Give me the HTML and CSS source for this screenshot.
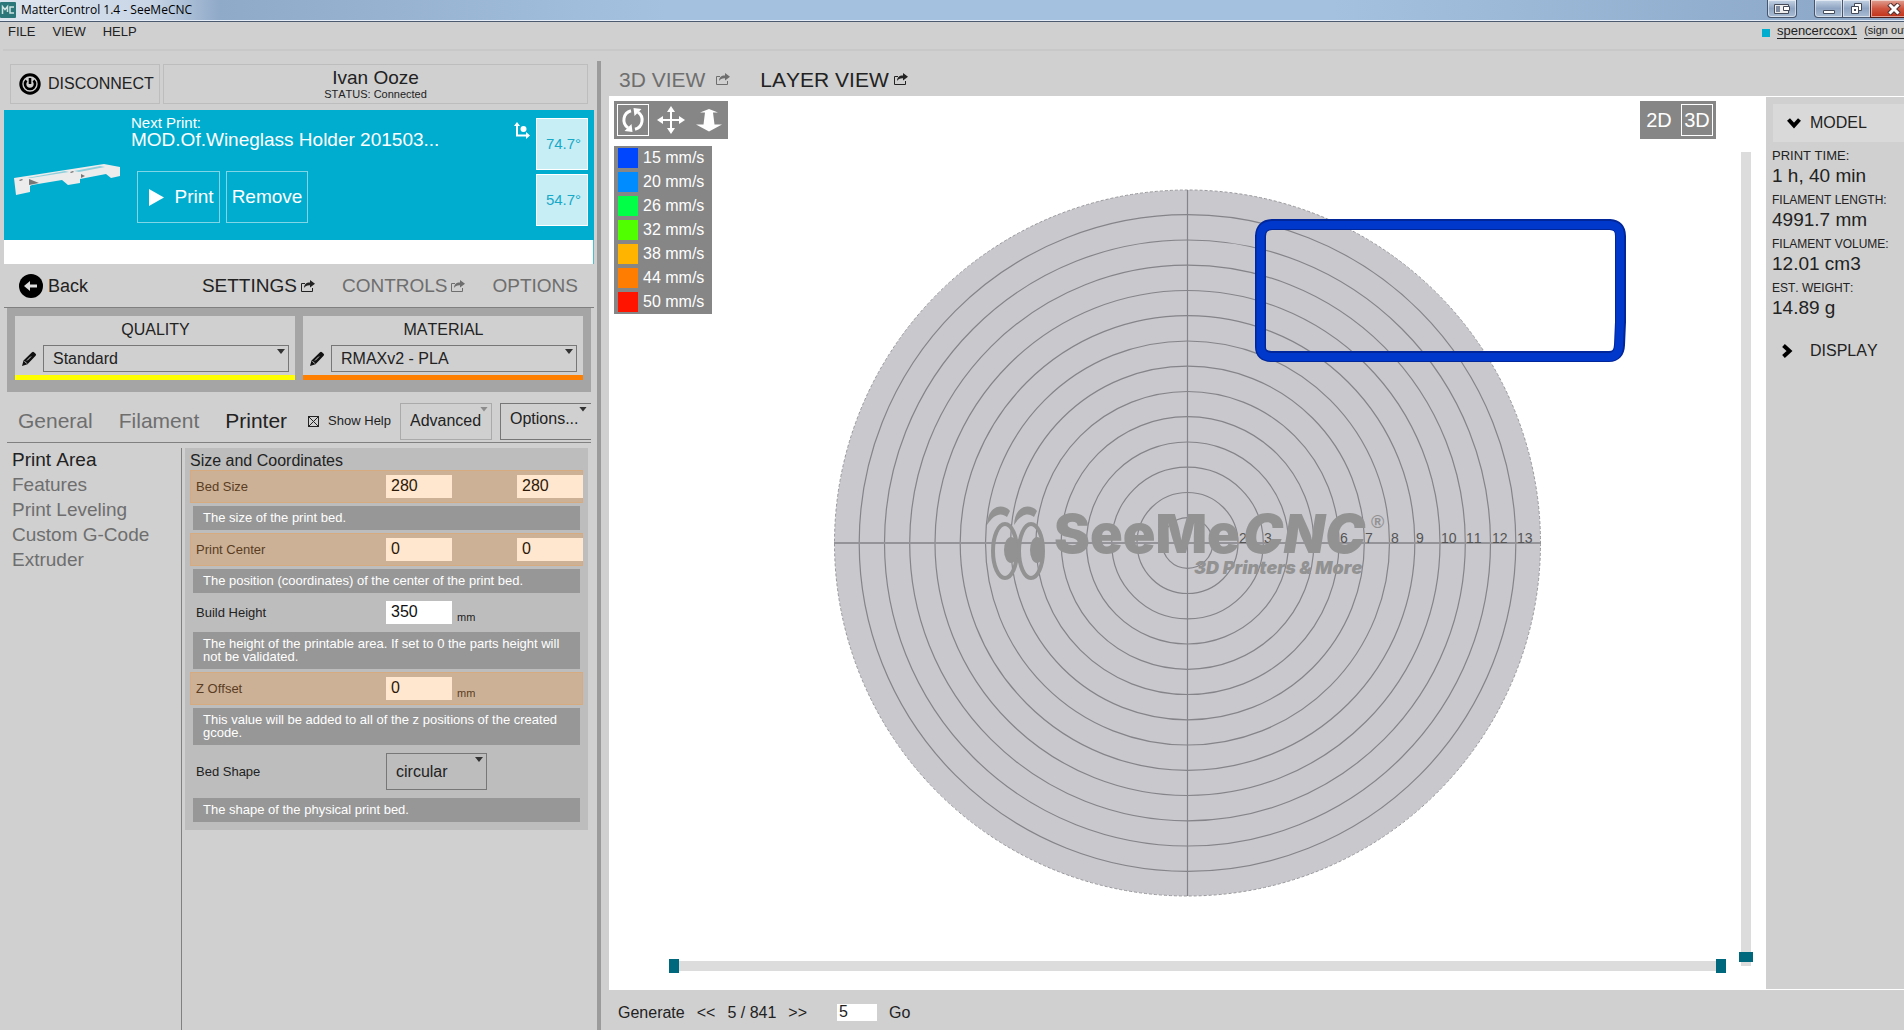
FILE: index.html
```
<!DOCTYPE html>
<html lang="en">
<head>
<meta charset="utf-8">
<title>MatterControl 1.4 - SeeMeCNC</title>
<link rel="stylesheet" href="styles.css">
</head>
<body>
<svg class="defs" aria-hidden="true">
  <symbol id="popout" viewBox="0 0 14 12">
    <path d="M4 3.5H.5v8h11V8" fill="none" stroke="currentColor" stroke-width="1"/>
    <path d="M3 8c0-3.500 2-5.500 6-5.500V0l5 3.800-5 3.700V5.200C6 5 4.500 6 3 8z" fill="currentColor"/>
  </symbol>
  <symbol id="pencil" viewBox="0 0 15 15">
    <path d="M0 15l1.500-5.500L10 1.200Q11 .2 12 1.200l1.600 1.600q1 1 0 2L5.500 13.300z" fill="#111"/>
    <path d="M2.500 10.200l2.400 2.400M5 9.500l4-4" stroke="#ccc" stroke-width="1" fill="none"/>
  </symbol>
</svg>

<header class="titlebar">
  <svg class="app-icon" viewBox="0 0 16 16" aria-hidden="true"><rect width="16" height="16" rx="1" fill="#2c7779"/><path d="M2.500 12V4.500l2.500 3 2.500-3V10M14 5h-4v6h4" fill="none" stroke="#cfe3e3" stroke-width="1.500"/></svg>
  <h1 class="app-title">MatterControl 1.4 - SeeMeCNC</h1>
  <div class="window-buttons">
    <button class="win-btn win-extra" aria-label="Displays"><svg width="16" height="12" viewBox="0 0 16 12"><path d="M.5 1.500h14v9H.5z" fill="#eee" stroke="#444a58"/><path d="M2 3h4v6H2z" fill="#7f8ba0"/><path d="M9.500 3.500h6v4h-6z" fill="#fff" stroke="#444a58"/></svg></button>
    <button class="win-btn" aria-label="Minimize"><svg width="14" height="12" viewBox="0 0 14 12"><path d="M1.500 7.500h11v3h-11z" fill="#fff" stroke="#444a58"/></svg></button>
    <button class="win-btn win-restore" aria-label="Restore"><svg width="14" height="12" viewBox="0 0 14 12"><path d="M4.500.5h7v7h-7z" fill="#fff" stroke="#444a58"/><path d="M1.500 3.500h7v7h-7z" fill="#fff" stroke="#444a58"/><path d="M4 6h2v2H4z" fill="#444a58"/></svg></button>
    <button class="win-btn win-close" aria-label="Close"><svg width="14" height="12" viewBox="0 0 14 12"><path d="M2 1l10 10M12 1L2 11" stroke="#503030" stroke-width="5"/><path d="M2.500 1.500l9 9M11.500 1.500l-9 9" stroke="#fff" stroke-width="3"/></svg></button>
  </div>
</header>

<div class="menubar">
  <nav class="menus">
    <button class="menu">FILE</button>
    <button class="menu">VIEW</button>
    <button class="menu">HELP</button>
  </nav>
  <div class="account">
    <span class="online"></span>
    <a class="user" href="#">spencerccox1</a>
    <a class="signout" href="#">(sign out)</a>
  </div>
</div>

<main class="workspace">
  <section class="left-pane">
    <div class="connection">
      <button class="disconnect">
        <svg width="22" height="22" viewBox="0 0 22 22" aria-hidden="true"><circle cx="11" cy="11" r="9.200" fill="none" stroke="#000" stroke-width="3"/><path d="M7.500 7.500a5 5 0 1 0 7 0" fill="none" stroke="#000" stroke-width="2.600"/><path d="M11 5v6" stroke="#000" stroke-width="2.600"/></svg>
        DISCONNECT
      </button>
      <button class="printer-status"><span class="printer-name">Ivan Ooze</span><span class="printer-state">STATUS: Connected</span></button>
    </div>

    <section class="next-print">
      <svg class="thumb" viewBox="0 0 106 32" aria-hidden="true">
        <path d="M0 14L90 0l16 3v9l-9 2-5-4-26 5v4l-12 2-6-5-30 5-2 1v6L2 31z" fill="#ececec"/>
        <path d="M13 14l38-7 4 1-38 6zM60 7l26-5 5 1-26 5z" fill="#8fcfdc"/>
        <path d="M15 15l10 4-10 2zM67 10l4 2-4 2zM5 16l3-1 1 1-3 1zM56 8l3-1 1 1-3 1z" fill="#777"/>
      </svg>
      <div class="job">
        <p class="job-caption">Next Print:</p>
        <p class="job-name">MOD.Of.Wineglass Holder 201503...</p>
        <div class="job-actions">
          <button class="job-btn print"><svg width="15" height="17" viewBox="0 0 15 17" aria-hidden="true"><path d="M0 0l15 8.500L0 17z" fill="#fff"/></svg>Print</button>
          <button class="job-btn">Remove</button>
        </div>
      </div>
      <svg class="axis" width="16" height="17" viewBox="0 0 16 17" aria-hidden="true"><path d="M3 3v10.500h10" fill="none" stroke="#fff" stroke-width="2"/><path d="M0 4l3-4 3 4zM12 10l4 3.500-4 3.500zM6.500 7a3 3 0 1 1 6 0 3 3 0 1 1-6 0z" fill="#fff"/></svg>
      <div class="temps">
        <button class="temp">74.7°</button>
        <button class="temp">54.7°</button>
      </div>
    </section>
    <div class="queue-strip"></div>

    <nav class="pane-tabs">
      <button class="back"><svg width="24" height="24" viewBox="0 0 24 24" aria-hidden="true"><circle cx="12" cy="12" r="12" fill="#000"/><path d="M18 12H9" stroke="#ddd" stroke-width="3"/><path d="M5 12l6-5v10z" fill="#ddd"/></svg>Back</button>
      <button class="pane-tab active">SETTINGS<svg width="14" height="12" aria-hidden="true"><use href="#popout"/></svg></button>
      <button class="pane-tab">CONTROLS<svg width="14" height="12" aria-hidden="true"><use href="#popout"/></svg></button>
      <button class="pane-tab">OPTIONS</button>
    </nav>

    <section class="presets">
      <div class="preset quality">
        <label class="preset-title" for="quality">QUALITY</label>
        <div class="preset-row">
          <svg width="15" height="15" aria-hidden="true"><use href="#pencil"/></svg>
          <span class="drop"><select id="quality"><option>Standard</option></select></span>
        </div>
      </div>
      <div class="preset material">
        <label class="preset-title" for="material">MATERIAL</label>
        <div class="preset-row">
          <svg width="15" height="15" aria-hidden="true"><use href="#pencil"/></svg>
          <span class="drop"><select id="material"><option>RMAXv2 - PLA</option></select></span>
        </div>
      </div>
    </section>

    <div class="setting-tabs">
      <button class="setting-tab">General</button>
      <button class="setting-tab">Filament</button>
      <button class="setting-tab active">Printer</button>
      <label class="show-help"><input type="checkbox" checked>Show Help</label>
      <span class="drop level"><select aria-label="Settings level"><option>Advanced</option></select></span>
      <span class="drop more"><select aria-label="Options"><option>Options...</option></select></span>
    </div>

    <div class="settings-body">
      <nav class="categories">
        <button class="category active">Print Area</button>
        <button class="category">Features</button>
        <button class="category">Print Leveling</button>
        <button class="category">Custom G-Code</button>
        <button class="category">Extruder</button>
      </nav>
      <div class="fields-wrap">
        <section class="fields">
          <h2 class="fields-title">Size and Coordinates</h2>
          <div class="field changed">
            <label for="bed-x">Bed Size</label>
            <input id="bed-x" type="text" value="280"><span class="unit"></span>
            <input type="text" value="280" aria-label="Bed size Y">
          </div>
          <p class="help">The size of the print bed.</p>
          <div class="field changed">
            <label for="center-x">Print Center</label>
            <input id="center-x" type="text" value="0"><span class="unit"></span>
            <input type="text" value="0" aria-label="Print center Y">
          </div>
          <p class="help">The position (coordinates) of the center of the print bed.</p>
          <div class="field">
            <label for="height">Build Height</label>
            <input id="height" type="text" value="350"><span class="unit">mm</span>
          </div>
          <p class="help">The height of the printable area. If set to 0 the parts height will not be validated.</p>
          <div class="field changed">
            <label for="z-offset">Z Offset</label>
            <input id="z-offset" type="text" value="0"><span class="unit">mm</span>
          </div>
          <p class="help">This value will be added to all of the z positions of the created gcode.</p>
          <div class="field shape">
            <label for="shape">Bed Shape</label>
            <span class="drop"><select id="shape"><option>circular</option></select></span>
          </div>
          <p class="help">The shape of the physical print bed.</p>
        </section>
      </div>
    </div>
  </section>

  <div class="splitter"></div>

  <section class="right-pane">
    <nav class="view-tabs">
      <button class="view-tab">3D VIEW<svg width="14" height="12" aria-hidden="true"><use href="#popout"/></svg></button>
      <button class="view-tab active">LAYER VIEW<svg width="14" height="12" aria-hidden="true"><use href="#popout"/></svg></button>
    </nav>

    <div class="view-area">
      <div class="viewport">
        <svg class="scene" viewBox="609 96 1157 894" role="img" aria-label="Print bed, layer 5">
          <circle cx="1187.500" cy="543" r="353" fill="#c9c8cd" stroke="#98989c" stroke-dasharray="3 2"/>
          <g fill="none" stroke="#848489" stroke-width="1.200">
            <circle cx="1187.500" cy="543" r="25.300"/><circle cx="1187.500" cy="543" r="50.500"/>
            <circle cx="1187.500" cy="543" r="75.800"/><circle cx="1187.500" cy="543" r="101"/>
            <circle cx="1187.500" cy="543" r="126.300"/><circle cx="1187.500" cy="543" r="151.500"/>
            <circle cx="1187.500" cy="543" r="176.800"/><circle cx="1187.500" cy="543" r="202"/>
            <circle cx="1187.500" cy="543" r="227.300"/><circle cx="1187.500" cy="543" r="252.500"/>
            <circle cx="1187.500" cy="543" r="277.800"/><circle cx="1187.500" cy="543" r="303"/>
            <circle cx="1187.500" cy="543" r="328.300"/>
            <path d="M1187.500 190v706"/>
          </g>
          <path d="M834 543h707" stroke="#949498" stroke-width="2"/>
          <g class="ring-no">
            <text x="1239" y="543">2</text><text x="1264" y="543">3</text><text x="1340" y="543">6</text>
            <text x="1365" y="543">7</text><text x="1391" y="543">8</text><text x="1416" y="543">9</text>
            <text x="1441" y="543">10</text><text x="1466" y="543">11</text><text x="1492" y="543">12</text>
            <text x="1517" y="543">13</text>
          </g>
          <g fill="none" stroke="#929292" stroke-width="4">
            <ellipse cx="1005" cy="551" rx="12" ry="27"/><ellipse cx="1031" cy="551" rx="12" ry="27"/>
          </g>
          <g fill="#929292">
            <ellipse cx="1011" cy="550" rx="7" ry="13"/><ellipse cx="1037" cy="550" rx="7" ry="13"/>
            <path d="M987 525c1-22 18-21 23-14l-3 6c-6-5-13-3-20 8zM1014 525c1-22 18-21 23-14l-3 6c-6-5-13-3-20 8z"/>
            <text class="logo" x="1054" y="553">SeeMe</text>
            <text class="logo slant" x="1243" y="553">CNC</text>
            <text class="reg" x="1371" y="528">®</text>
            <text class="tagline" x="1194" y="574">3D Printers &amp; More</text>
          </g>
          <g fill="none" stroke-linejoin="round">
            <path d="M1272 224.500H1610Q1620.500 225 1620.500 236V322L1619.500 345Q1619 356.500 1609 356.500H1271Q1260.500 356 1260.500 347V236Q1261 225 1272 224.500z" stroke="#00269a" stroke-width="11"/>
            <path d="M1272 225H1610Q1620 225.500 1620 236V322L1619 345Q1618.500 357 1609 357H1271Q1260.500 356 1260.500 347V236Q1261 225.500 1272 225z" stroke="#0038cc" stroke-width="8"/>
          </g>
        </svg>
        <div class="view-tools">
          <div class="tool-group">
            <button class="tool selected" aria-label="Rotate"><svg width="24" height="24" viewBox="0 0 24 24"><path d="M10 2.800a9.500 9.500 0 0 0-3 17M14 21.200a9.500 9.500 0 0 0 3-17" fill="none" stroke="#fff" stroke-width="3"/><path d="M3.500 23l8 1-1-8zM20.500 1l-8-1 1 8z" fill="#fff"/></svg></button>
            <button class="tool" aria-label="Pan"><svg width="28" height="28" viewBox="0 0 28 28"><path d="M14 4v20M4 14h20" stroke="#fff" stroke-width="2"/><path d="M14 0l4 6h-8zM14 28l4-6h-8zM0 14l6-4v8zM28 14l-6-4v8z" fill="#fff"/></svg></button>
            <button class="tool" aria-label="Zoom"><svg width="26" height="24" viewBox="0 0 26 24"><path d="M13 1l9 3.500h-5l1.500 12H26L13 23.500 0 16.500h7.500L9 4.500H4z" fill="#fff"/></svg></button>
          </div>
          <ul class="legend">
            <li><i class="swatch s15"></i>15 mm/s</li>
            <li><i class="swatch s20"></i>20 mm/s</li>
            <li><i class="swatch s26"></i>26 mm/s</li>
            <li><i class="swatch s32"></i>32 mm/s</li>
            <li><i class="swatch s38"></i>38 mm/s</li>
            <li><i class="swatch s44"></i>44 mm/s</li>
            <li><i class="swatch s50"></i>50 mm/s</li>
          </ul>
          <div class="path-range">
            <input type="range" min="0" max="100" value="0" aria-label="Path start">
            <input type="range" min="0" max="100" value="100" aria-label="Path end">
          </div>
        </div>
        <div class="view-side">
          <div class="tool-group dims">
            <button class="tool">2D</button>
            <button class="tool selected">3D</button>
          </div>
          <input class="layer-range" type="range" min="1" max="841" value="5" aria-label="Layer">
        </div>
      </div>

      <aside class="details">
        <button class="section-head open"><svg width="14" height="12" viewBox="0 0 14 12" aria-hidden="true"><path d="M1.500 2.500L7 8.500l5.500-6" fill="none" stroke="#000" stroke-width="4"/></svg>MODEL</button>
        <dl class="stats">
          <dt class="first">PRINT TIME:</dt><dd>1 h, 40 min</dd>
          <dt>FILAMENT LENGTH:</dt><dd>4991.7 mm</dd>
          <dt>FILAMENT VOLUME:</dt><dd>12.01 cm3</dd>
          <dt>EST. WEIGHT:</dt><dd>14.89 g</dd>
        </dl>
        <button class="section-head"><svg width="14" height="14" viewBox="0 0 14 14" aria-hidden="true"><path d="M1.500 1.500L7.500 7l-6 5.500" fill="none" stroke="#000" stroke-width="4"/></svg>DISPLAY</button>
      </aside>
    </div>

    <footer class="layer-bar">
      <button class="bar-btn">Generate</button>
      <button class="bar-btn">&lt;&lt;</button>
      <span>5 / 841</span>
      <button class="bar-btn">&gt;&gt;</button>
      <input class="layer-input" type="text" value="5" aria-label="Layer number">
      <button class="bar-btn">Go</button>
    </footer>
  </section>
</main>
</body>
</html>
```
FILE: styles.css
```
* { box-sizing: border-box; }

body {
  margin: 0;
  height: 100vh;
  display: flex;
  flex-direction: column;
  overflow: hidden;
  background: #d0d0d0;
  color: #222;
  font: 16px/18px "Liberation Sans", Arial, sans-serif;
  font-kerning: none;
}

button, input, select { font: inherit; font-kerning: none; color: inherit; margin: 0; }
button { background: none; border: 0; padding: 0; text-align: left; white-space: nowrap; }
h1, h2, p, ul, dl, dd { margin: 0; padding: 0; font-weight: normal; }
svg { display: block; flex: none; }
.defs { position: absolute; width: 0; height: 0; }

/* Window title bar */
.titlebar {
  flex: none;
  display: flex;
  align-items: center;
  gap: 5px;
  height: 22px;
  padding-bottom: 2px;
  border-bottom: 1px solid #4c5a70;
  background: linear-gradient(90deg, #dde5ee 0, #c9d6e6 150px, #8fa9c8 220px, #98b3d2 400px, #a4c2e0 35%, #a4c2e0 70%, #8aa5c6 100%);
  box-shadow: inset 0 -1px #e4edf7;
}
.app-icon { width: 16px; height: 16px; }
.app-title { flex: 1; font: 12px/18px "Open Sans", "Noto Sans", sans-serif; color: #000; }
.window-buttons { display: flex; align-self: flex-start; height: 18px; }
.win-btn {
  display: flex;
  align-items: center;
  justify-content: center;
  width: 28px;
  border: 1px solid #46546c;
  border-top: 0;
  background: linear-gradient(#c5d3e5, #8ea4c2 50%, #a9bcd4);
  box-shadow: inset 0 0 0 1px #ffffff88;
}
.win-extra { width: 30px; margin-right: 17px; border-radius: 0 0 4px 4px; }
.win-extra + .win-btn { width: 29px; border-radius: 0 0 0 4px; }
.win-restore { width: 27px; border-width: 0 0 1px; }
.win-close { width: 48px; margin-right: -14px; background: linear-gradient(#e0a193, #cf5640 50%, #c23018); border-color: #4b1c18; }

/* Menu bar */
.menubar {
  flex: none;
  display: flex;
  justify-content: space-between;
  height: 29px;
  margin-left: 3px;
  border-bottom: 2px solid #c8c8c8;
}
.menus { display: flex; gap: 17px; padding-left: 5px; font-size: 13px; height: 20px; }
.account { display: flex; align-items: flex-start; gap: 7px; padding-top: 1px; margin-right: -6px; }
.online { width: 8px; height: 8px; margin-top: 6px; background: #00adcf; }
.account a { color: #222; text-decoration: none; border-bottom: 1px solid #222; line-height: 15px; }
.user { font-size: 13px; }
.signout { font-size: 11px; }

.workspace { flex: 1; display: flex; min-height: 0; }

/* Left pane */
.left-pane { flex: none; width: 597px; display: flex; flex-direction: column; padding-top: 13px; overflow: hidden; }
.splitter { flex: none; width: 4px; margin-top: 10px; background: #9b9b9b; }

.connection { display: flex; gap: 3px; height: 40px; margin: 0 9px 6px 10px; }
.connection button { border: 1px solid #bdbdbd; }
.disconnect { display: flex; align-items: center; gap: 7px; width: 150px; padding-left: 8px; }
.printer-status { flex: 1; display: flex; flex-direction: column; align-items: center; padding-top: 3px; }
.printer-name { font-size: 19px; line-height: 20px; }
.printer-state { font-size: 11px; line-height: 12px; }

.next-print { flex: none; display: flex; height: 130px; margin: 0 3px 0 4px; padding: 8px 6px 0 10px; background: #00adcf; color: #fff; }
.thumb { width: 106px; height: 32px; margin: 46px 11px 0 0; }
.job { flex: 1; }
.job-caption { font-size: 15px; line-height: 10px; }
.job-name { font-size: 19px; line-height: 24px; }
.job-actions { display: flex; gap: 6px; margin: 19px 0 0 6px; }
.job-btn { display: flex; align-items: center; justify-content: center; height: 52px; width: 82px; border: 1px solid #7fd6e7; font-size: 19px; }
.print { width: 83px; gap: 10px; padding-left: 6px; }
.axis { margin: 4px 6px 0 0; }
.temps { display: flex; flex-direction: column; gap: 4px; }
.temp { width: 52px; height: 52px; border: 1px solid #fff; background: #c8eef5; color: #17a9c8; font-size: 15px; text-align: center; padding-left: 3px; }
.queue-strip { flex: none; height: 24px; margin: 0 3px 0 4px; background: #fff; border-right: 1px solid #4cbdd4; }

.pane-tabs { flex: none; display: flex; align-items: center; gap: 27px; height: 44px; margin: 0 3px 0 4px; padding: 0 16px 0 15px; border-bottom: 1px solid #808080; font-size: 19px; color: #6e6e6e; }
.pane-tab { display: flex; align-items: center; gap: 4px; }
.back { display: flex; align-items: center; gap: 5px; margin-right: auto; color: #222; font-size: 18px; }
.active { color: #222; }

.presets { flex: none; display: flex; gap: 8px; height: 84px; margin: 0 6px 0 7px; padding: 8px 8px 12px; background: #a5a5a5; }
.preset { flex: 1; display: flex; flex-direction: column; align-items: stretch; padding: 4px 6px 0 7px; background: #d0d0d0; border-bottom: 5px solid #ff0; }
.material { border-bottom-color: #ff8000; }
.preset-title { text-align: center; line-height: 19px; }
.preset-row { display: flex; align-items: center; gap: 6px; margin-top: 6px; }
.preset-row .drop { flex: 1; height: 27px; }

/* Drop-downs carry their arrow in the upper right corner */
.drop { position: relative; display: block; }
.drop select { appearance: none; display: block; width: 100%; height: 100%; padding: 0 9px; border: 1px solid #777; border-radius: 0; background: transparent; }
.drop::after { content: ""; position: absolute; top: 4px; right: 4px; width: 8px; height: 5px; background: #333; clip-path: polygon(0 0, 100% 0, 50% 100%); pointer-events: none; }

.setting-tabs { flex: none; display: flex; align-items: center; gap: 26px; height: 51px; margin: 0 6px 0 7px; padding: 8px 0 0 11px; border-bottom: 1px solid #808080; overflow: hidden; }
.setting-tab { font-size: 21px; line-height: 24px; color: #6e6e6e; }
.setting-tab.active { color: #222; }
.show-help { flex: none; display: flex; align-items: center; gap: 9px; margin-left: -5px; font-size: 13px; }
.show-help input { appearance: none; width: 11px; height: 11px; border: 1px solid #222; background: linear-gradient(45deg, transparent 45%, #222 45% 55%, transparent 55%), linear-gradient(-45deg, transparent 45%, #222 45% 55%, transparent 55%); }
.level { flex: none; width: 92px; height: 37px; margin-left: -17px; }
.level select { border-color: #aaa; }
.level::after { background: #8c8c8c; }
.more { flex: none; width: 98px; height: 37px; margin-left: -18px; }
.more::after { right: 11px; }
.more select { padding-bottom: 4px; }

.settings-body { flex: 1; display: flex; min-height: 0; padding-top: 5px; }
.categories { flex: none; width: 182px; display: flex; flex-direction: column; padding-left: 12px; border-right: 1px solid #808080; }
.category { font-size: 19px; line-height: 25px; color: #6e6e6e; }
.category:first-child { line-height: 24px; }
.category.active { color: #222; }

.fields-wrap { flex: 1; padding: 0 9px 0 3px; }
.fields { display: flex; flex-direction: column; gap: 3px; padding: 0 5px 8px; background: #bdbdbd; }
.fields-title { font-size: 16px; line-height: 19px; padding-top: 3px; margin-bottom: -3px; }
.field { flex: none; display: flex; align-items: center; height: 33px; padding-left: 6px; font-size: 13px; }
.field label { width: 190px; }
.field input { width: 66px; height: 23px; padding: 0 5px 2px; border: 0; border-radius: 0; background: #fff; font-size: 16px; color: #111; }
.unit { width: 65px; padding: 9px 0 0 5px; font-size: 11px; }
.changed { background: #ccb197; box-shadow: inset 0 0 0 1px #d6ab80; color: #5a3d22; }
.changed input { background: #ffe6cf; color: #2c1a08; }
.help { margin: 0 3px; padding: 5px 8px 6px 10px; background: #979797; color: #fff; font-size: 13px; line-height: 13px; }
.shape { height: 47px; }
.shape .drop { width: 101px; height: 37px; font-size: 16px; }

/* Right pane */
.right-pane { flex: 1; min-width: 0; display: flex; flex-direction: column; padding-left: 8px; }
.view-tabs { flex: none; display: flex; gap: 30px; height: 45px; padding: 17px 0 0 10px; font-size: 21px; line-height: 24px; color: #6e6e6e; }
.view-tab { display: flex; gap: 5px; height: 24px; color: #6e6e6e; }
.view-tab.active { color: #222; }
.view-tab svg { margin-top: 5px; }
.view-tab:first-child { gap: 11px; }

.view-area { flex: 1; display: flex; min-height: 0; background: #fff; }
.viewport { position: relative; flex: 1; min-width: 0; display: flex; justify-content: space-between; padding: 5px 13px 15px 5px; }
.scene { position: absolute; inset: 0; width: 100%; height: 100%; }
.scene text { font-family: "Liberation Sans", Arial, sans-serif; }
.ring-no { font-size: 14px; fill: #555; }
.scene .logo { font-family: Inter, "Liberation Sans", sans-serif; font-size: 54px; font-weight: 900; }
.slant { font-style: italic; }
.scene .tagline { font-family: Inter, "Liberation Sans", sans-serif; font-size: 18px; font-weight: 900; font-style: italic; }
.reg { font-size: 18px; font-weight: bold; }

.view-tools, .view-side { position: relative; display: flex; flex-direction: column; }
.view-tools { flex: 1; align-items: flex-start; }
.tool-group { display: flex; gap: 6px; padding: 3px; background: #868686; color: #fff; font-size: 20px; }
.tool { display: flex; align-items: center; justify-content: center; width: 32px; height: 32px; }
.tool.selected { border: 1px solid #fff; color: #fff; }
.legend { margin-top: 7px; padding: 2px 4px; width: 98px; background: #868686; color: #fff; list-style: none; display: flex; flex-direction: column; gap: 4px; }
.legend li { display: flex; align-items: center; gap: 5px; height: 20px; }
.swatch { width: 20px; height: 20px; }
.s15 { background: #0046ff; }
.s20 { background: #008cff; }
.s26 { background: #00ff46; }
.s32 { background: #50ff00; }
.s38 { background: #ffb400; }
.s44 { background: #ff7d00; }
.s50 { background: #ff1400; }

.path-range { align-self: stretch; display: grid; margin: auto -6px 2px 55px; height: 14px; background: linear-gradient(#dcdcdc, #dcdcdc) center / 100% 10px no-repeat; }
.path-range input { grid-area: 1 / 1; appearance: none; width: 100%; height: 14px; background: none; pointer-events: none; }
input[type="range"]::-webkit-slider-thumb { appearance: none; width: 10px; height: 14px; border: 0; border-radius: 0; background: #00687c; pointer-events: auto; }

.view-side { width: 113px; margin-left: -80px; }
.dims { align-self: flex-start; width: 76px; justify-content: space-between; }
.layer-range { appearance: none; align-self: flex-end; flex: 1; writing-mode: vertical-lr; direction: rtl; width: 14px; margin: 13px 0 9px; background: linear-gradient(#dcdcdc, #dcdcdc) center / 10px 100% no-repeat; }
input.layer-range::-webkit-slider-thumb { width: 14px; height: 10px; }

.details { flex: none; width: 138px; margin: 1px 0; padding: 7px 0 0 6px; background: #d0d0d0; overflow: hidden; }
.section-head { display: flex; align-items: center; width: 100%; height: 38px; padding-left: 9px; margin-left: 1px; gap: 14px; }
.open { background: #d9d9d9; padding-left: 14px; gap: 9px; }
.stats { padding-top: 5px; }
.stats dt { font-size: 12px; line-height: 18px; white-space: nowrap; }
.stats .first { font-size: 13px; }
.stats dd { font-size: 19px; line-height: 22px; margin-bottom: 4px; }
.stats + .section-head { margin-top: 13px; }

.layer-bar { flex: none; display: flex; align-items: center; gap: 12px; height: 40px; padding: 6px 9px 0; }
.layer-input { width: 40px; height: 17px; padding: 0 2px; margin: 0 0 2px 18px; border: 0; background: #fff; }
```
